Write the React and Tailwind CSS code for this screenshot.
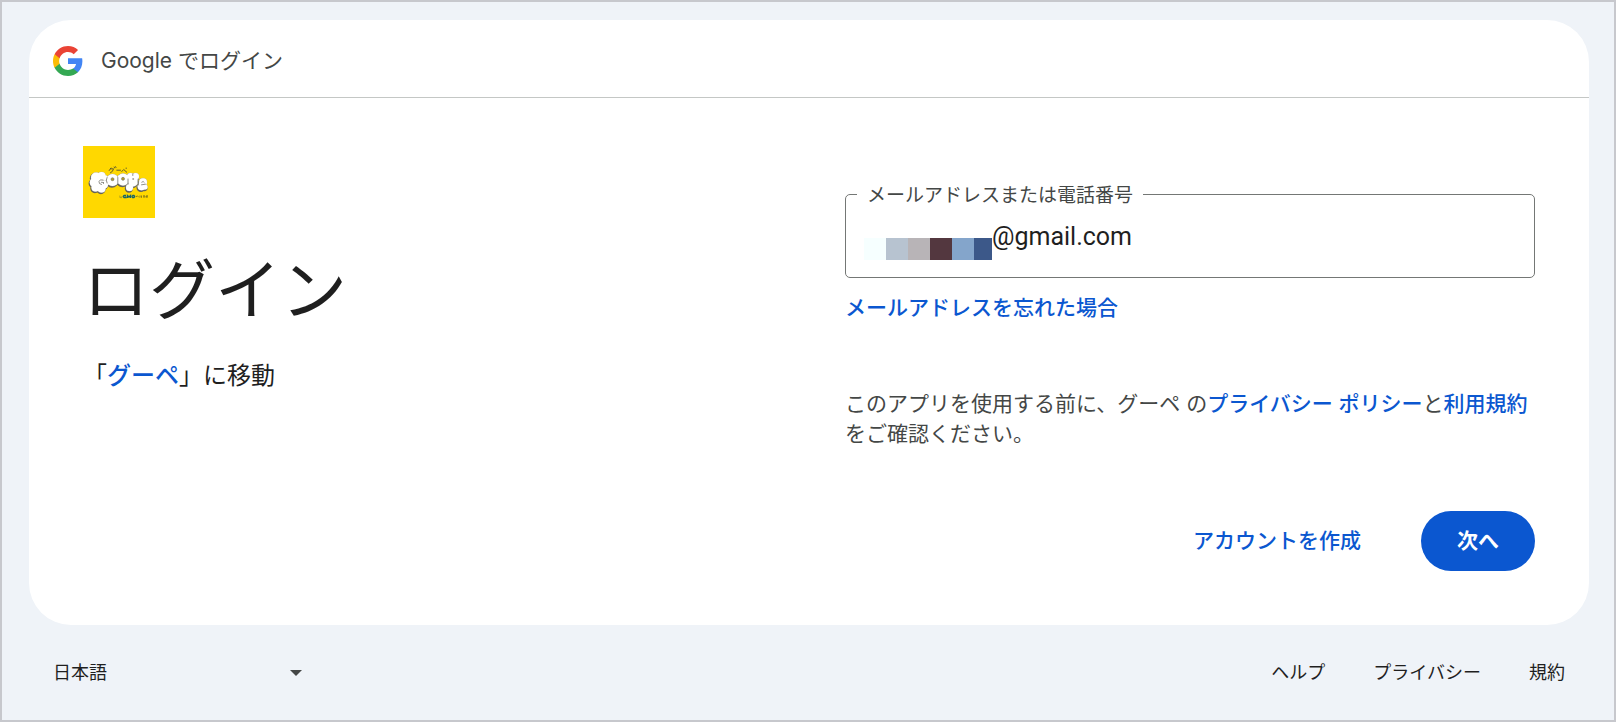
const link =
  "font-medium text-[#0b57d0] rounded focus-visible:outline-2 focus-visible:outline-[#0b57d0]";

const maskColors = [
  "w-[22px] bg-[#f6ffff]",
  "w-[22px] bg-[#b7c3d0]",
  "w-[22px] bg-[#b8b4b7]",
  "w-[22px] bg-[#53373f]",
  "w-[22px] bg-[#84a5cb]",
  "w-[18px] bg-[#3c5889]",
];

function GoogleLogo() {
  return (
    <svg viewBox="2 2 44 44" className="size-[30px]" aria-hidden="true">
      <path fill="#4285F4" d="M45.12 24.5c0-1.56-.14-3.06-.4-4.5H24v8.51h11.84c-.51 2.75-2.06 5.08-4.39 6.64v5.52h7.11c4.16-3.83 6.56-9.47 6.56-16.17z" />
      <path fill="#34A853" d="M24 46c5.94 0 10.92-1.97 14.56-5.33l-7.11-5.52c-1.97 1.32-4.49 2.1-7.45 2.1-5.73 0-10.58-3.87-12.31-9.07H4.34v5.7C7.96 41.07 15.4 46 24 46z" />
      <path fill="#FBBC05" d="M11.69 28.18C11.25 26.86 11 25.45 11 24s.25-2.86.69-4.18v-5.7H4.34C2.85 17.09 2 20.45 2 24c0 3.55.85 6.91 2.34 9.88l7.35-5.7z" />
      <path fill="#EA4335" d="M24 10.75c3.23 0 6.13 1.11 8.41 3.29l6.31-6.31C34.91 4.18 29.93 2 24 2 15.4 2 7.96 6.93 4.34 14.12l7.35 5.7c1.73-5.2 6.58-9.07 12.31-9.07z" />
    </svg>
  );
}

function CloudLetters() {
  return (
    <>
      <circle cx="13" cy="31.5" r="5" />
      <circle cx="18.5" cy="30" r="4" />
      <circle cx="22" cy="32" r="2.8" />
      <circle cx="10.8" cy="36.5" r="4" />
      <circle cx="12.5" cy="41.500" r="4" />
      <circle cx="18.5" cy="42.500" r="4" />
      <circle cx="21" cy="38.500" r="4" />
      <circle cx="16" cy="36" r="4" />
      <circle cx="29.500" cy="34" r="6" />
      <circle cx="40" cy="33.500" r="6" />
      <circle cx="47.500" cy="30.500" r="3.500" />
      <circle cx="52.500" cy="30.500" r="3.500" />
      <circle cx="50" cy="35.500" r="5" />
      <circle cx="46.500" cy="41.500" r="3.500" />
      <circle cx="60" cy="36.200" r="4" />
      <circle cx="58.500" cy="40.500" r="3.800" />
      <circle cx="62" cy="41" r="2.500" />
    </>
  );
}

function GoopeLogo() {
  return (
    <svg viewBox="0 0 72 72" className="size-[72px]" role="img" aria-label="グーペ">
      <rect width="72" height="72" fill="#ffd800" />
      <path
        fill="none"
        stroke="#55522f"
        strokeWidth=".9"
        strokeLinecap="round"
        d="M28 22l-1.800 2.500M27.500 22.800h3q-.5 3-3 4M31.200 21l.4.900M32.600 20.700l.4.900M33.800 24.200h3.700M38.800 25.500l1.900-2 3 2.700M43 22.200h.5"
      />
      <g transform="translate(-.6 1)" fill="#64635c" stroke="#64635c" strokeWidth="1.300">
        <CloudLetters />
      </g>
      <g fill="#b5b4ae" stroke="#b5b4ae" strokeWidth=".5">
        <CloudLetters />
      </g>
      <g fill="#fff">
        <CloudLetters />
      </g>
      <g fill="none" stroke="#85847e" strokeWidth=".9" strokeLinecap="round" strokeLinejoin="round">
        <path d="M20 34q-3.500-1-4 1.500t2.500 3M18.300 36.300l2.200.2M20.500 36.500v1" />
        <path d="M24 31.500q-1.500 2.500 0 5.500M34.800 31.500v5M45 33v5M55.200 33q-.8 3 .3 6M49.800 28v1.500" />
        <path d="M58.500 38.800l4-.6M58.800 36.200l1.400-.7 1 1" />
      </g>
      <circle cx="29.500" cy="33.200" r="1.500" fill="#b49e2a" stroke="#74726a" strokeWidth=".6" />
      <circle cx="40" cy="32.800" r="1.500" fill="#b49e2a" stroke="#74726a" strokeWidth=".6" />
      <circle cx="50.200" cy="33" r="1" fill="#a5a49c" />
      <path fill="none" stroke="#a99a22" strokeWidth=".8" d="M36.800 49.500v2h1.200v-1M39 50.300l-.8 2" />
      <path
        fill="none"
        stroke="#17636b"
        strokeWidth="1.300"
        d="M43 49.500h-2q-1.500 1 0 2h2v-1M44.500 52v-2.500l1.500 1.500 1.500-1.500v2.500M49.500 49.500h1.500q1.500 1 0 2h-1.500q-1-1 0-2"
      />
      <path
        fill="none"
        stroke="#6f691f"
        strokeWidth=".8"
        d="M53 51l1.300-1.200 1.500 1.500M57 49.500v2M58.500 49.500v2.300M60 50h2M61 49.500v2.500M63 51.500v-1.500h2M64 49.500v2.500"
      />
    </svg>
  );
}

function EmailField() {
  return (
    <fieldset className="min-w-0 rounded-[5px] border border-[#747775] focus-within:border-[#0b57d0]">
      <legend className="ml-[11px] px-[10px] pt-1 text-[19px] leading-6 text-[#444746]">
        <label htmlFor="email">メールアドレスまたは電話番号</label>
      </legend>
      <div className="flex items-end pr-4 pb-[9px] pl-[18px]">
        <div className="mb-2 flex h-[22px] shrink-0" aria-hidden="true">
          {maskColors.map((color) => (
            <span key={color} className={color} />
          ))}
        </div>
        <input
          id="email"
          type="text"
          defaultValue="@gmail.com"
          className="h-[60px] min-w-0 flex-1 bg-transparent pb-1 font-['Roboto','Noto_Sans_CJK_JP',sans-serif] text-[25px] text-[#1f1f1f] outline-none"
        />
      </div>
    </fieldset>
  );
}

export default function App() {
  return (
    <div
      lang="ja"
      className="flex min-h-screen flex-col border-2 border-[#c7c8cd] bg-[#eff3f8] pt-[18px] pr-[25px] pl-[27px] font-['Inter','Noto_Sans_CJK_JP',sans-serif] text-[#1f1f1f]"
    >
      <div className="rounded-[42px] bg-white">
        <header className="flex items-center gap-[18px] border-b border-[#c4c7c5] px-6 pt-[26px] pb-[21px] text-[21px] leading-[30px] text-[#444746]">
          <GoogleLogo />
          <span>Google でログイン</span>
        </header>

        <main className="grid gap-x-[72px] px-[54px] pt-12 pb-[54px] md:grid-cols-2">
          <section>
            <GoopeLogo />
            <h1 className="mt-8 text-[66px] leading-[80px]">ログイン</h1>
            <p className="mt-[30px] text-[24px] leading-8">
              「<a href="#goope" className={link}>グーペ</a>」に移動
            </p>
          </section>

          <form className="pt-[34px]" onSubmit={(e) => e.preventDefault()}>
            <EmailField />
            <a href="#forgot" className={`mt-[15px] block w-fit text-[21px] leading-[30px] ${link}`}>
              メールアドレスを忘れた場合
            </a>
            <p className="mt-[66px] text-[21px] leading-[30px] text-[#444746]">
              このアプリを使用する前に、グーペ の
              <a href="#privacy-policy" className={link}>プライバシー ポリシー</a>と
              <a href="#terms-of-use" className={link}>利用規約</a>をご確認ください。
            </p>
            <div className="mt-[62px] flex items-center justify-end gap-[60px] text-[21px] leading-[30px]">
              <button type="button" className={link}>アカウントを作成</button>
              <button type="submit" className="rounded-full bg-[#0b57d0] px-9 py-[15px] font-bold text-white">
                次へ
              </button>
            </div>
          </form>
        </main>
      </div>

      <footer className="flex items-center justify-between px-6 pt-[33px] pb-[30px] text-[18px] leading-[30px]">
        <div className="grid w-[256px] items-center">
          <select
            aria-label="言語"
            className="col-start-1 row-start-1 w-full appearance-none bg-transparent"
            defaultValue="ja"
          >
            <option value="ja">日本語</option>
          </select>
          <svg viewBox="0 0 12 6" className="pointer-events-none col-start-1 row-start-1 mr-[7px] h-[6px] w-3 justify-self-end fill-[#444746]" aria-hidden="true">
            <path d="M0 0h12L6 6z" />
          </svg>
        </div>
        <nav className="flex gap-12">
          <a href="#help">ヘルプ</a>
          <a href="#privacy">プライバシー</a>
          <a href="#terms">規約</a>
        </nav>
      </footer>
    </div>
  );
}
